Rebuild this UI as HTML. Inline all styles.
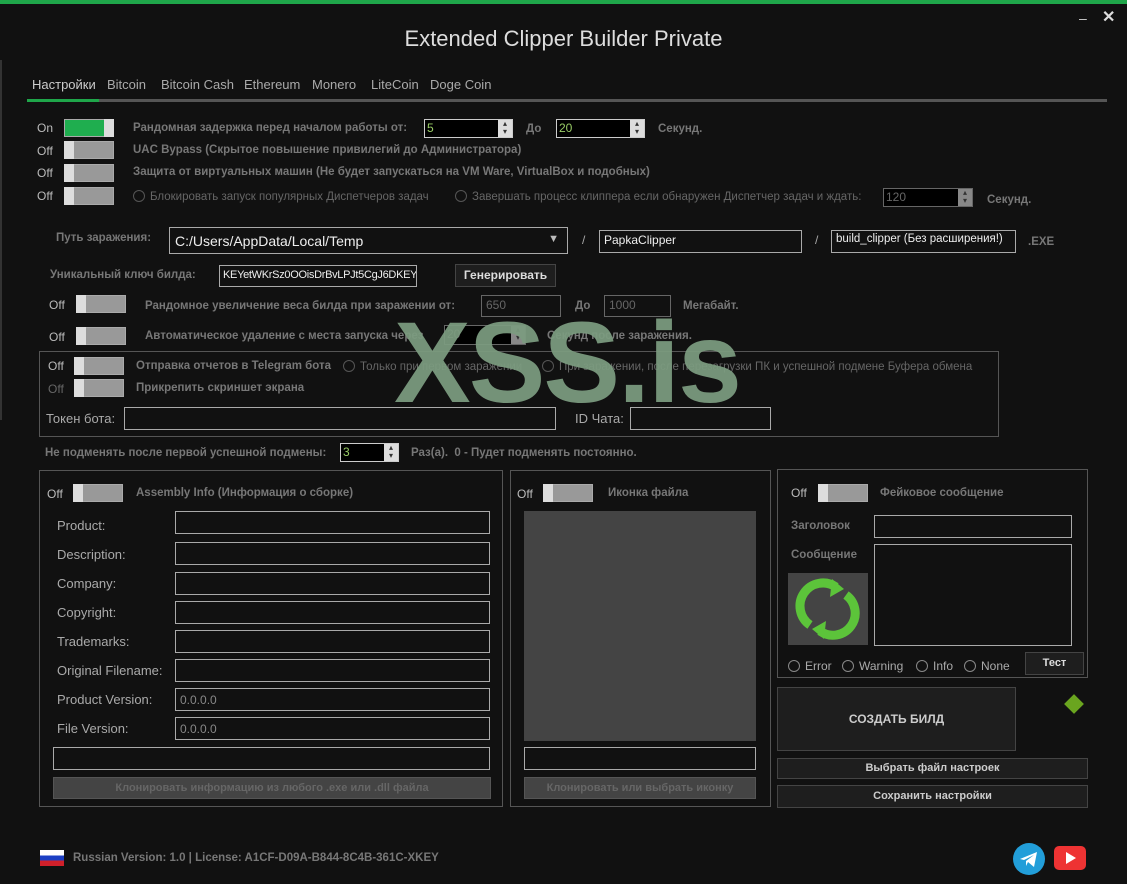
<!DOCTYPE html>
<html><head><meta charset="utf-8"><style>
*{margin:0;padding:0;box-sizing:border-box}
body{width:1127px;height:884px;background:#111;position:relative;overflow:hidden;font-family:"Liberation Sans",sans-serif;color:#bbb;font-size:12px}
.a{position:absolute;white-space:nowrap}
.lb{font-weight:bold;color:#777;font-size:11.5px}
.off{color:#bbb;font-size:12px}
.tg{position:absolute;width:50px;height:18px;border:1px solid #aaa;background:#999}
.tg::before{content:"";position:absolute;left:-1px;top:-1px;width:10px;height:18px;background:#ddd}
.tg.on{background:#1fae4f}
.tg.on::before{left:auto;right:-1px}
.sp{position:absolute;background:#000;border:1px solid #ccc;color:#9c6;font-size:12px;padding:1px 2px}
.sp::after{content:"▴\A▾";white-space:pre;position:absolute;right:0;top:0;width:14px;height:100%;background:#ddd;color:#333;font-size:8px;line-height:8px;text-align:center}
.sp.dim{color:#777;border-color:#666}
.sp.dim::after{background:#888}
.inp{position:absolute;border:1px solid #aaa;background:#111;color:#eee;font-size:12px;padding:2px 4px;overflow:hidden}
.inp.dim{border-color:#666;color:#666}
.grp{position:absolute;border:1px solid #555}
.btn{position:absolute;background:#1e1e1e;border:1px solid #444;color:#ddd;font-weight:bold;font-size:11px;text-align:center}
.rad{display:inline-block;width:12px;height:12px;border:1px solid #888;border-radius:50%;vertical-align:-2px;margin-right:5px}
.fl{color:#aaa;font-size:13px}
.tab{top:77px;color:#aaa;font-size:13px}
</style></head><body>
<div class="a" style="left:0;top:0;width:1127px;height:4px;background:#1fa64a"></div>
<div class="a" style="left:1079px;top:10px;color:#ccc;font-size:14px">–</div>
<div class="a" style="left:1102px;top:7px;color:#ddd;font-size:16px;font-weight:bold">✕</div>
<div class="a" style="left:0;top:26px;width:1127px;text-align:center;color:#ddd;font-size:22px">Extended Clipper Builder Private</div>
<div class="a" style="left:0;top:60px;width:2px;height:360px;background:#333"></div>
<div class="a tab" style="left:32px;color:#ccc">Настройки</div>
<div class="a tab" style="left:107px">Bitcoin</div>
<div class="a tab" style="left:161px">Bitcoin Cash</div>
<div class="a tab" style="left:244px">Ethereum</div>
<div class="a tab" style="left:312px">Monero</div>
<div class="a tab" style="left:371px">LiteCoin</div>
<div class="a tab" style="left:430px">Doge Coin</div>
<div class="a" style="left:27px;top:99px;width:1080px;height:3px;background:#555"></div>
<div class="a" style="left:27px;top:99px;width:72px;height:3px;background:#1fa64a"></div>

<div class="a off" style="left:37px;top:121px">On</div><div class="tg on" style="left:64px;top:119px"></div>
<div class="a lb" style="left:133px;top:122px">Рандомная задержка перед началом работы от:</div>
<div class="sp" style="left:424px;top:119px;width:89px;height:19px">5</div>
<div class="a lb" style="left:526px;top:123px">До</div>
<div class="sp" style="left:556px;top:119px;width:89px;height:19px">20</div>
<div class="a lb" style="left:658px;top:123px">Секунд.</div>
<div class="a off" style="left:37px;top:144px">Off</div><div class="tg" style="left:64px;top:141px"></div>
<div class="a lb" style="left:133px;top:144px">UAC Bypass (Скрытое повышение привилегий до Администратора)</div>
<div class="a off" style="left:37px;top:166px">Off</div><div class="tg" style="left:64px;top:164px"></div>
<div class="a lb" style="left:133px;top:166px">Защита от виртуальных машин (Не будет запускаться на VM Ware, VirtualBox и подобных)</div>
<div class="a off" style="left:37px;top:189px">Off</div><div class="tg" style="left:64px;top:187px"></div>
<div class="a" style="left:133px;top:190px;color:#666;font-size:11.5px"><span class="rad" style="border-color:#555"></span>Блокировать запуск популярных Диспетчеров задач</div>
<div class="a" style="left:455px;top:190px;color:#666;font-size:11.5px"><span class="rad" style="border-color:#555"></span>Завершать процесс клиппера если обнаружен Диспетчер задач и ждать:</div>
<div class="sp dim" style="left:883px;top:188px;width:90px;height:19px;color:#666">120</div>
<div class="a lb" style="left:987px;top:194px">Секунд.</div>

<div class="a lb" style="left:56px;top:232px">Путь заражения:</div>
<div class="inp" style="left:169px;top:227px;width:399px;height:27px;font-size:14px;padding:5px 5px">C:/Users/AppData/Local/Temp<span style="position:absolute;right:8px;top:5px;color:#bbb;font-size:11px">▼</span></div>
<div class="a" style="left:582px;top:233px;color:#aaa">/</div>
<div class="inp" style="left:599px;top:230px;width:203px;height:23px">PapkaClipper</div>
<div class="a" style="left:815px;top:233px;color:#aaa">/</div>
<div class="inp" style="left:831px;top:230px;width:185px;height:23px;font-size:11.5px">build_clipper (Без расширения!)</div>
<div class="a lb" style="left:1028px;top:236px">.EXE</div>

<div class="a lb" style="left:50px;top:269px">Уникальный ключ билда:</div>
<div class="inp" style="left:219px;top:265px;width:198px;height:22px;font-size:11px;padding:3px 3px;letter-spacing:-0.3px">KEYetWKrSz0OOisDrBvLPJt5CgJ6DKEY</div>
<div class="btn" style="left:455px;top:264px;width:101px;height:23px;line-height:21px;font-size:12px">Генерировать</div>

<div class="a off" style="left:49px;top:298px">Off</div><div class="tg" style="left:76px;top:295px"></div>
<div class="a lb" style="left:145px;top:300px">Рандомное увеличение веса билда при заражении от:</div>
<div class="inp dim" style="left:481px;top:295px;width:80px;height:22px">650</div>
<div class="a lb" style="left:575px;top:300px">До</div>
<div class="inp dim" style="left:604px;top:295px;width:67px;height:22px">1000</div>
<div class="a lb" style="left:683px;top:300px">Мегабайт.</div>
<div class="a off" style="left:49px;top:330px">Off</div><div class="tg" style="left:76px;top:327px"></div>
<div class="a lb" style="left:145px;top:330px">Автоматическое удаление с места запуска через</div>
<div class="sp dim" style="left:444px;top:325px;width:82px;height:20px">20</div>
<div class="a lb" style="left:547px;top:330px">Секунд после заражения.</div>

<div class="grp" style="left:39px;top:351px;width:960px;height:86px"></div>
<div class="a off" style="left:48px;top:359px">Off</div><div class="tg" style="left:74px;top:357px"></div>
<div class="a lb" style="left:136px;top:360px">Отправка отчетов в Telegram бота</div>
<div class="a" style="left:343px;top:360px;color:#666;font-size:11.5px"><span class="rad" style="border-color:#555"></span>Только при первом заражении</div>
<div class="a" style="left:542px;top:360px;color:#666;font-size:11.5px"><span class="rad" style="border-color:#555"></span>При заражении, после перезагрузки ПК и успешной подмене Буфера обмена</div>
<div class="a" style="left:48px;top:382px;color:#666">Off</div><div class="tg" style="left:74px;top:379px"></div>
<div class="a lb" style="left:136px;top:382px">Прикрепить скриншет экрана</div>
<div class="a fl" style="left:46px;top:411px">Токен бота:</div>
<div class="inp" style="left:124px;top:407px;width:432px;height:23px"></div>
<div class="a fl" style="left:575px;top:411px">ID Чата:</div>
<div class="inp" style="left:630px;top:407px;width:141px;height:23px"></div>

<div class="a lb" style="left:45px;top:447px">Не подменять после первой успешной подмены:</div>
<div class="sp" style="left:340px;top:443px;width:59px;height:19px">3</div>
<div class="a lb" style="left:411px;top:447px">Раз(а).&nbsp; 0 - Пудет подменять постоянно.</div>

<div class="grp" style="left:39px;top:470px;width:464px;height:337px"></div>
<div class="a off" style="left:47px;top:487px">Off</div><div class="tg" style="left:73px;top:484px"></div>
<div class="a lb" style="left:136px;top:487px">Assembly Info (Информация о сборке)</div>
<div class="a fl" style="left:57px;top:518px">Product:</div><div class="inp" style="left:175px;top:511px;width:315px;height:23px"></div>
<div class="a fl" style="left:57px;top:547px">Description:</div><div class="inp" style="left:175px;top:542px;width:315px;height:23px"></div>
<div class="a fl" style="left:57px;top:576px">Company:</div><div class="inp" style="left:175px;top:572px;width:315px;height:23px"></div>
<div class="a fl" style="left:57px;top:605px">Copyright:</div><div class="inp" style="left:175px;top:601px;width:315px;height:23px"></div>
<div class="a fl" style="left:57px;top:634px">Trademarks:</div><div class="inp" style="left:175px;top:630px;width:315px;height:23px"></div>
<div class="a fl" style="left:57px;top:663px">Original Filename:</div><div class="inp" style="left:175px;top:659px;width:315px;height:23px"></div>
<div class="a fl" style="left:57px;top:692px">Product Version:</div><div class="inp" style="left:175px;top:688px;width:315px;height:23px;color:#888;padding-top:4px">0.0.0.0</div>
<div class="a fl" style="left:57px;top:721px">File Version:</div><div class="inp" style="left:175px;top:717px;width:315px;height:23px;color:#888;padding-top:4px">0.0.0.0</div>
<div class="inp" style="left:53px;top:747px;width:437px;height:23px"></div>
<div class="btn" style="left:53px;top:777px;width:438px;height:22px;line-height:20px;background:#444;color:#666;border-color:#555">Клонировать информацию из любого .exe или .dll файла</div>

<div class="grp" style="left:510px;top:470px;width:261px;height:337px"></div>
<div class="a off" style="left:517px;top:487px">Off</div><div class="tg" style="left:543px;top:484px"></div>
<div class="a lb" style="left:608px;top:487px">Иконка файла</div>
<div class="a" style="left:524px;top:511px;width:232px;height:230px;background:#444"></div>
<div class="inp" style="left:524px;top:747px;width:232px;height:23px"></div>
<div class="btn" style="left:524px;top:777px;width:232px;height:22px;line-height:20px;background:#444;color:#666;border-color:#555">Клонировать или выбрать иконку</div>

<div class="grp" style="left:777px;top:469px;width:311px;height:209px"></div>
<div class="a off" style="left:791px;top:486px">Off</div><div class="tg" style="left:818px;top:484px"></div>
<div class="a lb" style="left:880px;top:487px">Фейковое сообщение</div>
<div class="a lb" style="left:791px;top:520px">Заголовок</div>
<div class="inp" style="left:874px;top:515px;width:198px;height:23px"></div>
<div class="a lb" style="left:791px;top:549px">Сообщение</div>
<div class="inp" style="left:874px;top:544px;width:198px;height:102px"></div>
<div class="a" style="left:788px;top:573px;width:80px;height:72px;background:#444">
<svg width="80" height="72" viewBox="0 0 80 72"><g fill="none" stroke="#5cc43a" stroke-width="9"><path d="M22 52 A22 22 0 0 1 48 14"/><path d="M58 22 A22 22 0 0 1 32 58"/></g><path d="M44 6 L56 16 L42 24Z" fill="#5cc43a"/><path d="M36 66 L24 56 L38 48Z" fill="#5cc43a"/></svg></div>
<div class="a" style="left:788px;top:659px;color:#aaa"><span class="rad"></span>Error</div>
<div class="a" style="left:842px;top:659px;color:#aaa"><span class="rad"></span>Warning</div>
<div class="a" style="left:916px;top:659px;color:#aaa"><span class="rad"></span>Info</div>
<div class="a" style="left:964px;top:659px;color:#aaa"><span class="rad"></span>None</div>
<div class="btn" style="left:1025px;top:652px;width:59px;height:23px;line-height:21px">Тест</div>

<div class="btn" style="left:777px;top:687px;width:239px;height:64px;line-height:62px;font-size:12px;color:#ccc">СОЗДАТЬ БИЛД</div>
<div class="a" style="left:1067px;top:697px;width:14px;height:14px;background:#6aa51f;transform:rotate(45deg)"></div>
<div class="btn" style="left:777px;top:758px;width:311px;height:21px;line-height:19px;color:#ccc">Выбрать файл настроек</div>
<div class="btn" style="left:777px;top:785px;width:311px;height:23px;line-height:21px;color:#ccc">Сохранить настройки</div>

<div class="a" style="left:40px;top:850px;width:24px;height:16px;background:linear-gradient(#fff 0 33%,#1c3fc4 33% 66%,#d0202a 66%)"></div>
<div class="a lb" style="left:73px;top:852px">Russian Version: 1.0 | License: A1CF-D09A-B844-8C4B-361C-XKEY</div>
<div class="a" style="left:1013px;top:843px;width:32px;height:32px;border-radius:50%;background:#229ed9">
<svg width="32" height="32" viewBox="0 0 32 32"><path d="M7 16 L24 9 L21 24 L15 19 L13 23 L13 18 L21 12 L11 17Z" fill="#fff"/></svg></div>
<div class="a" style="left:1054px;top:846px;width:32px;height:24px;border-radius:5px;background:#e33">
<svg width="32" height="24"><path d="M12 6 L22 12 L12 18Z" fill="#fff"/></svg></div>

<div class="a" style="left:394px;top:306px;font-size:115px;font-weight:bold;color:#7c9c80;opacity:.93;letter-spacing:-2px;line-height:115px">XSS.is</div>
</body></html>
